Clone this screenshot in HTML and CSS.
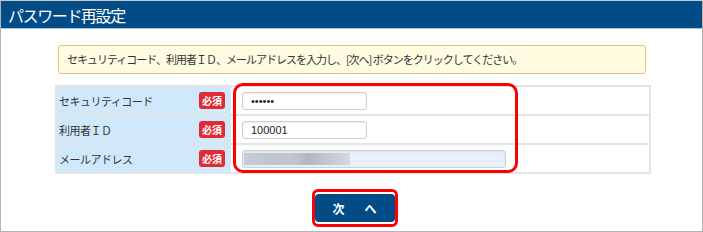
FILE: index.html
```html
<!DOCTYPE html>
<html lang="ja">
<head>
    <meta charset="UTF-8">
    <meta name="viewport" content="width=device-width, initial-scale=1.0">
    <title>パスワード再設定</title>
    <link rel="stylesheet" href="styles.css">
</head>
<body>
    <div class="frame">
        <div class="header">
            <h1>パスワード再設定</h1>
        </div>

        <div class="content">
            <div class="notice">セキュリティコード、利用者ＩＤ、メールアドレスを入力し、[次へ] ボタンをクリックしてください。</div>

            <div class="form-wrap">
                <table class="form-table">
                    <tr>
                        <th><div class="th-inner"><span class="label">セキュリティコード</span><span class="required">必須</span></div></th>
                        <td><input type="text" class="field" value="••••••"></td>
                    </tr>
                    <tr>
                        <th><div class="th-inner"><span class="label">利用者ＩＤ</span><span class="required">必須</span></div></th>
                        <td><input type="text" class="field" value="100001"></td>
                    </tr>
                    <tr>
                        <th><div class="th-inner"><span class="label">メールアドレス</span><span class="required">必須</span></div></th>
                        <td><div class="field field-wide"><span class="blurred"></span></div></td>
                    </tr>
                </table>
                <div class="highlight"></div>
            </div>

            <div class="actions">
                <span class="btn-mark"><button type="button" class="next-btn">次　へ</button></span>
            </div>
        </div>
    </div>
</body>
</html>
```

FILE: styles.css
```css
body {
    margin: 0;
    padding: 0;
    background-color: #fff;
    font-family: "Noto Sans CJK JP", "Noto Sans", sans-serif;
    color: #333;
}

.frame {
    width: 703px;
    height: 232px;
    box-sizing: border-box;
    border: 1px solid #b4b4b4;
    border-top-color: #c8c8c8;
}

.header {
    height: 27px;
    background: #014b87;
    border-bottom: 1px solid #a9c6e3;
    display: flex;
    align-items: center;
}

.header h1 {
    margin: 0 0 0 7px;
    font-size: 16px;
    font-weight: normal;
    color: #fff;
    letter-spacing: -1.4px;
}

.content {
    padding-top: 16px;
}

.notice {
    margin: 0 56px 0 57px;
    height: 27px;
    line-height: 27px;
    padding-left: 8px;
    background: #fffce2;
    border: 1px solid #dcc07a;
    border-radius: 3px;
    font-size: 11px;
    letter-spacing: -1px;
    color: #333;
}

.form-wrap {
    position: relative;
    margin: 11px 0 0 54px;
    width: 596px;
}

.form-table {
    width: 100%;
    border-collapse: collapse;
    border: 2px solid #e4e4e4;
}

.form-table tr {
    border-bottom: 2px solid #e4e4e4;
}

.form-table th {
    width: 166px;
    height: 27px;
    padding: 0 6px 0 2px;
    background: #cfe9fb;
    font-weight: normal;
    text-align: left;
}

.th-inner {
    display: flex;
    align-items: center;
    justify-content: space-between;
}

.th-inner .label {
    font-size: 11px;
    letter-spacing: -0.5px;
    color: #333;
}

.required {
    width: 26px;
    height: 17px;
    line-height: 17px;
    background: #e02a35;
    border-radius: 3px;
    color: #fff;
    font-size: 10px;
    font-weight: bold;
    text-align: center;
}

.form-table td {
    padding: 0 0 0 11px;
    background: #fff;
}

.field {
    display: block;
    width: 125px;
    height: 18px;
    box-sizing: border-box;
    padding: 0 8px;
    border: 1px solid #cfcfcf;
    border-radius: 3px;
    box-shadow: inset 0 1px 2px rgba(0, 0, 0, 0.08);
    font-family: "Liberation Sans", Arial, sans-serif;
    font-size: 11px;
    color: #222;
    outline: none;
}

.field-wide {
    width: 264px;
    padding: 2px 1px;
    background: #e8f0fd;
}

.blurred {
    display: block;
    width: 106px;
    height: 12px;
    background: linear-gradient(90deg, #c8ccd4 0%, #bfc3cb 30%, #c4c7ce 45%, #b3b6bd 60%, #c9ccd2 85%, #d6d9df 100%);
    filter: blur(0.6px);
}

.highlight {
    position: absolute;
    left: 178px;
    top: -2px;
    width: 285px;
    height: 90px;
    box-sizing: border-box;
    border: 3px solid #f00;
    border-radius: 10px;
}

.actions {
    display: flex;
    justify-content: center;
    margin-top: 15px;
    padding-left: 6px;
}

.btn-mark {
    display: inline-block;
    padding: 2px 0;
    border: 3px solid #f00;
    border-radius: 6px;
}

.next-btn {
    display: block;
    width: 80px;
    height: 28px;
    margin: 0;
    padding: 0 0 0 4px;
    border: none;
    border-radius: 4px;
    background: #014b87;
    color: #fff;
    font-family: "Noto Sans CJK JP", sans-serif;
    font-size: 12px;
    font-weight: bold;
    letter-spacing: 4px;
    cursor: pointer;
}

.next-btn:hover {
    background: #003a6b;
}
```
